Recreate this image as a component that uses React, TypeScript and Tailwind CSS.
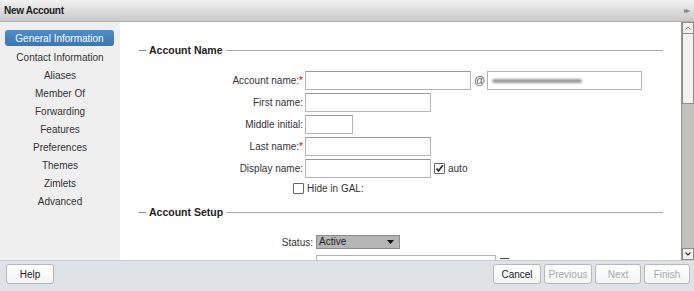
import React from "react";

const font = { fontFamily: '"Liberation Sans", Arial, sans-serif' };

function Field({ label, req, children }: { label: string; req?: boolean; children: React.ReactNode }) {
  return (
    <div className="flex items-center h-[19px]">
      <div className="w-[185px] pr-[2px] text-right text-[10px] leading-[13px] text-[#333]">
        {label}:{req && <span className="text-[#d00]">*</span>}
      </div>
      {children}
    </div>
  );
}

function Input({ w }: { w: string }) {
  return <div className={`${w} h-[19px] bg-white border border-[#b4b4b4] border-t-[#9a9a9a]`} />;
}

function Box({ checked }: { checked?: boolean }) {
  return (
    <div className="w-[11px] h-[11px] border border-[#666] bg-white rounded-[1px] flex items-center justify-center">
      {checked && (
        <svg width="9" height="9" viewBox="0 0 9 9">
          <path d="M1.5 4.5 L3.5 7 L7.8 1.2" fill="none" stroke="#222" strokeWidth="1.6" />
        </svg>
      )}
    </div>
  );
}

function Section({ title }: { title: string }) {
  return (
    <div className="flex items-center h-[14px] pl-[19px] pr-[18px]">
      <div className="w-[7px] h-px bg-[#888]" />
      <div className="mx-[3px] text-[10.5px] font-bold text-[#222] leading-[14px]">{title}</div>
      <div className="flex-1 h-px bg-[#aaa]" />
    </div>
  );
}

function Btn({ label, w, disabled }: { label: string; w: string; disabled?: boolean }) {
  return (
    <div
      className={`${w} h-[20px] flex items-center justify-center rounded-[3px] border border-[#b8b8b8] bg-gradient-to-b from-white to-[#f4f4f4] text-[10px] ${
        disabled ? "text-[#a8a8a8]" : "text-[#222]"
      }`}
    >
      {label}
    </div>
  );
}

export default function App() {
  const items = [
    "General Information",
    "Contact Information",
    "Aliases",
    "Member Of",
    "Forwarding",
    "Features",
    "Preferences",
    "Themes",
    "Zimlets",
    "Advanced",
  ];
  return (
    <div className="w-[694px] h-[291px] flex flex-col overflow-hidden bg-white" style={font}>
      {/* title bar */}
      <div className="h-[22px] flex items-center justify-between pl-[4px] pr-[6px] bg-gradient-to-b from-[#f2f2f2] to-[#c9c9c9] border-b border-[#b0b0b0]">
        <span className="text-[10px] font-bold tracking-[-0.3px] text-[#222]">New Account</span>
        <span className="text-[8px] text-[#888] tracking-[-2px]">▸▸</span>
      </div>

      {/* middle */}
      <div className="flex h-[238px]">
        {/* sidebar */}
        <div className="w-[120px] bg-[#efefef] pt-[8px] flex flex-col items-stretch">
          {items.map((it, i) =>
            i === 0 ? (
              <div
                key={it}
                className="mx-[5px] w-[109px] h-[16px] rounded-[3px] bg-gradient-to-b from-[#4f8dcc] to-[#3a75b5] text-white text-[10px] flex items-center justify-center"
              >
                {it}
              </div>
            ) : (
              <div key={it} className="h-[18px] flex items-center justify-center text-[10px] text-[#333] pt-[4px]">
                {it}
              </div>
            )
          )}
        </div>

        {/* content */}
        <div className="w-[561px] overflow-hidden bg-white">
          <div className="mt-[21px]">
            <Section title="Account Name" />
          </div>
          <div className="mt-[14px] flex flex-col gap-[3px]">
            <Field label="Account name" req>
              <Input w="w-[166px]" />
              <span className="ml-[3px] mr-[2px] text-[11px] text-[#555]">@</span>
              <div className="w-[155px] h-[19px] bg-white border border-[#b4b4b4] flex items-center pl-[4px]">
                <div className="w-[90px] h-[4px] rounded-full bg-[#9a9a9a] blur-[1px]" />
              </div>
            </Field>
            <Field label="First name">
              <Input w="w-[126px]" />
            </Field>
            <Field label="Middle initial">
              <Input w="w-[48px]" />
            </Field>
            <Field label="Last name" req>
              <Input w="w-[126px]" />
            </Field>
            <Field label="Display name">
              <Input w="w-[126px]" />
              <div className="ml-[3px]">
                <Box checked />
              </div>
              <span className="ml-[3px] text-[10px] text-[#333]">auto</span>
            </Field>
          </div>
          <div className="mt-[2px] h-[16px] flex items-center">
            <div className="w-[173px]" />
            <Box />
            <span className="ml-[3px] text-[10px] text-[#333]">Hide in GAL:</span>
          </div>
          <div className="mt-[9px]">
            <Section title="Account Setup" />
          </div>
          <div className="mt-[16px] flex items-center h-[14px]">
            <div className="w-[196px] pr-[3px] text-right text-[10px] text-[#333]">Status:</div>
            <div className="w-[84px] h-[14px] bg-[#b5b5b5] border border-[#8c8c8c] flex items-center justify-between pl-[2px] pr-[5px]">
              <span className="text-[10px] leading-[12px] text-[#222]">Active</span>
              <svg width="7" height="4" viewBox="0 0 7 4">
                <path d="M0 0 H7 L3.5 4 Z" fill="#111" />
              </svg>
            </div>
          </div>
          <div className="mt-[6px] flex items-start">
            <div className="w-[196px]" />
            <div className="w-[180px] h-[19px] border border-[#b4b4b4]" />
            <div className="ml-[4px] mt-[3px] w-[9px] h-px bg-[#444]" />
          </div>
        </div>

        {/* scrollbar */}
        <div className="w-[13px] bg-[#c4c0bc] border-l border-[#9a9794] flex flex-col justify-between">
          <div className="flex flex-col">
            <div className="h-[12px] bg-[#f2f0ee] border border-[#8e8a86] flex items-center justify-center">
              <svg width="6" height="4" viewBox="0 0 6 4">
                <path d="M0.5 3.5 L3 1 L5.5 3.5" fill="none" stroke="#777" strokeWidth="1" />
              </svg>
            </div>
            <div className="h-[70px] bg-[#f4f2f0] border border-[#8e8a86] border-t-0" />
          </div>
          <div className="h-[12px] bg-[#f2f0ee] border border-[#8e8a86] flex items-center justify-center">
            <svg width="6" height="4" viewBox="0 0 6 4">
              <path d="M0.5 0.5 L3 3 L5.5 0.5" fill="none" stroke="#333" strokeWidth="1.2" />
            </svg>
          </div>
        </div>
      </div>

      {/* footer */}
      <div className="h-[31px] bg-[#dfe2e7] border-t border-[#c9ccd1] flex items-start justify-between pt-[3px] pl-[6px] pr-[4px]">
        <Btn label="Help" w="w-[48px]" />
        <div className="flex gap-[3px]">
          <Btn label="Cancel" w="w-[48px]" />
          <Btn label="Previous" w="w-[48px]" disabled />
          <Btn label="Next" w="w-[46px]" disabled />
          <Btn label="Finish" w="w-[46px]" disabled />
        </div>
      </div>
    </div>
  );
}
